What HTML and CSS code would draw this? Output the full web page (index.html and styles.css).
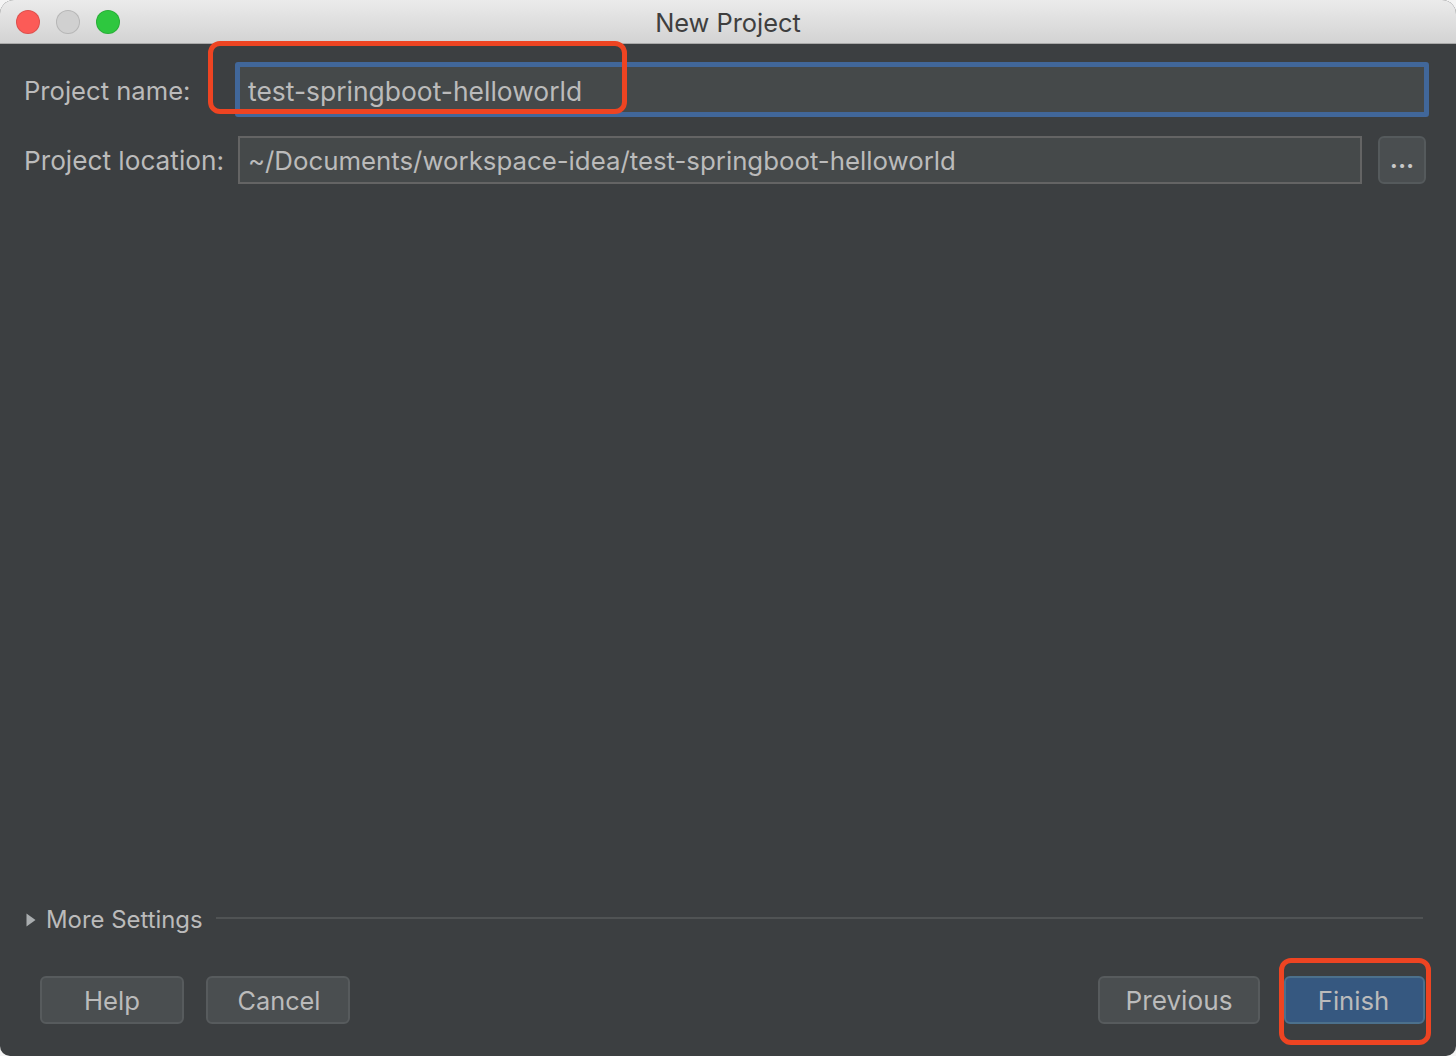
FILE: index.html
```html
<!DOCTYPE html>
<html lang="en">
<head>
<meta charset="utf-8">
<title>New Project</title>
<link rel="stylesheet" href="styles.css">
</head>
<body>
<div class="window">
  <header class="titlebar">
    <div class="lights">
      <span class="light red"></span>
      <span class="light grey"></span>
      <span class="light green"></span>
    </div>
    <div class="title">New Project</div>
  </header>
  <main class="content">
    <div class="form">
      <div class="row row-name">
        <label class="label label-name">Project name:</label>
        <div class="field field-focus">test-springboot-helloworld</div>
      </div>
      <div class="row row-location">
        <label class="label label-location">Project location:</label>
        <div class="field field-plain">~/Documents/workspace-idea/test-springboot-helloworld</div>
        <button class="browse">...</button>
      </div>
    </div>
    <div class="more">
      <svg class="arrow" width="10" height="14" viewBox="0 0 10 14"><path d="M0.5 0.5L9.5 7L0.5 13.5Z" fill="#a9adaf"/></svg>
      <span class="more-label">More Settings</span>
      <span class="more-line"></span>
    </div>
    <footer class="buttons">
      <div class="group">
        <button class="btn btn-help">Help</button>
        <button class="btn btn-cancel">Cancel</button>
      </div>
      <div class="group group-right">
        <button class="btn btn-prev">Previous</button>
        <button class="btn btn-finish">Finish</button>
      </div>
    </footer>
  </main>
  <div class="mark mark-name"></div>
  <div class="mark mark-finish"></div>
</div>
</body>
</html>
```
FILE: styles.css
```css
* { box-sizing: border-box; }
html, body { margin: 0; padding: 0; background: #f4f4f4; }
body { width: 1456px; height: 1056px; overflow: hidden; font-family: Inter, "Liberation Sans", sans-serif; }
.window { position: relative; width: 1456px; height: 1056px; display: flex; flex-direction: column; border-radius: 14px 14px 10px 10px; overflow: hidden; background: #3c3f41; }
.titlebar { position: relative; height: 44px; flex: none; display: flex; align-items: center; justify-content: center; background: linear-gradient(#ebebeb, #d3d3d3); border-bottom: 1px solid #a9a9a9; }
.lights { position: absolute; left: 16px; top: 10px; display: flex; gap: 16px; }
.light { width: 24px; height: 24px; border-radius: 50%; border: 1px solid rgba(0,0,0,.12); }
.red { background: #fc5b57; }
.grey { background: #d0d0d0; }
.green { background: #2ec73f; }
.title { padding-top: 1px; font-size: 25.4px; color: #3f3f3f; }
.content { flex: 1; display: flex; flex-direction: column; padding: 18px 30px 32px 24px; color: #bbbbbb; font-size: 25.7px; }
.form { flex: 1; display: flex; flex-direction: column; gap: 19px; }
.row { display: flex; align-items: center; }
.label { flex: none; }
.label-name { width: 211px; padding-top: 1px; font-size: 25.6px; }
.label-location { width: 214px; font-size: 26.2px; }
.field { display: flex; align-items: center; background: #45494a; color: #bbbbbb; white-space: nowrap; }
.field-focus { flex: 1; height: 55px; margin-right: -3px; padding: 2px 0 0 8px; border: 5px solid #41679a; border-radius: 3px; font-size: 26.45px; }
.field-plain { flex: 1; height: 48px; padding-left: 8px; border: 2px solid #646464; font-size: 25.8px; }
.browse { flex: none; width: 48px; height: 48px; margin-left: 16px; padding: 0 0 4px; background: #4a4e50; border: 2px solid #555a5c; border-radius: 6px; color: #c8c8c8; font: inherit; font-weight: 600; }
.more { display: flex; align-items: center; height: 30px; margin-bottom: 41px; font-size: 23.9px; }
.arrow { flex: none; margin: 0 10px 0 2px; }
.more-label { flex: none; padding-bottom: 2px; }
.more-line { flex: 1; height: 2px; margin: 0 3px 4px 13px; background: #505354; }
.buttons { display: flex; justify-content: space-between; padding-left: 16px; }
.group { display: flex; gap: 22px; }
.group-right { gap: 24px; margin-right: 1px; }
.btn { height: 48px; padding: 0; border: 2px solid #575b5d; border-radius: 6px; background: #4a4e50; color: #bbbbbb; font: inherit; }
.btn-help { width: 144px; }
.btn-cancel { width: 144px; padding-left: 2px; font-size: 25.3px; }
.btn-prev { width: 162px; font-size: 26.2px; }
.btn-finish { width: 141px; padding-right: 2px; background: #365880; border-color: #4c708c; }
.mark { position: absolute; border: 5px solid #ee4422; border-radius: 12px; pointer-events: none; }
.mark-name { left: 208px; top: 41px; width: 419px; height: 73px; }
.mark-finish { left: 1279px; top: 958px; width: 152px; height: 87px; }
```
